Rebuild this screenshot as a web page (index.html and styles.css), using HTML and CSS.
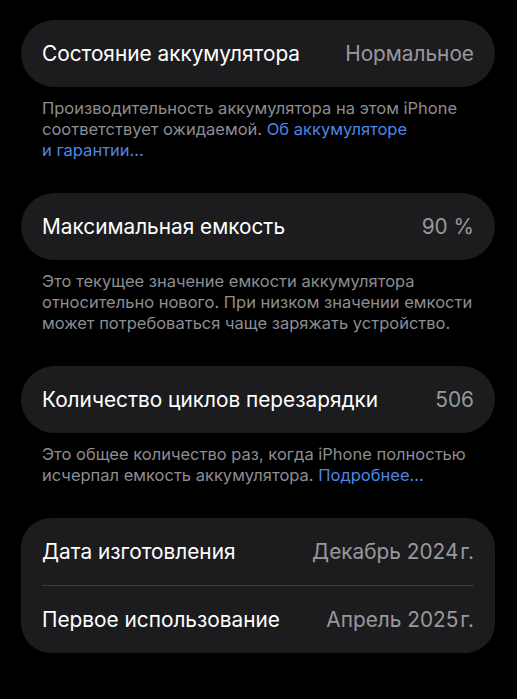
FILE: index.html
```html
<!DOCTYPE html>
<html lang="ru">
<head>
    <meta charset="UTF-8">
    <meta name="viewport" content="width=device-width, initial-scale=1.0">
    <title>Аккумулятор</title>
    <link rel="stylesheet" href="styles.css">
</head>
<body>
    <div class="page">
        <div class="section">
            <div class="card">
                <div class="row">
                    <span class="label">Состояние аккумулятора</span>
                    <span class="value">Нормальное</span>
                </div>
            </div>
            <p class="footer">Производительность аккумулятора на этом iPhone соответствует ожидаемой. <a href="#">Об аккумуляторе<br>и гарантии…</a></p>
        </div>

        <div class="section">
            <div class="card">
                <div class="row">
                    <span class="label">Максимальная емкость</span>
                    <span class="value">90 %</span>
                </div>
            </div>
            <p class="footer">Это текущее значение емкости аккумулятора относительно нового. При низком значении емкости может потребоваться чаще заряжать устройство.</p>
        </div>

        <div class="section">
            <div class="card">
                <div class="row">
                    <span class="label">Количество циклов перезарядки</span>
                    <span class="value">506</span>
                </div>
            </div>
            <p class="footer">Это общее количество раз, когда iPhone полностью исчерпал емкость аккумулятора. <a href="#">Подробнее…</a></p>
        </div>

        <div class="section">
            <div class="card card-list">
                <div class="row">
                    <span class="label">Дата изготовления</span>
                    <span class="value">Декабрь 2024&#8202;г.</span>
                </div>
                <div class="divider"></div>
                <div class="row">
                    <span class="label">Первое использование</span>
                    <span class="value">Апрель 2025&#8202;г.</span>
                </div>
            </div>
        </div>
    </div>
</body>
</html>
```

FILE: styles.css
```css
* {
    box-sizing: border-box;
}

body {
    margin: 0;
    background: #000;
    font-family: Inter, "Noto Sans", sans-serif;
    color: #fff;
}

.page {
    display: flex;
    flex-direction: column;
    gap: 32px;
    padding: 20px 22px 0 21px;
}

.card {
    background: #1c1c1e;
    border-radius: 34px;
    padding: 0 21px;
}

.card-list {
    border-radius: 30px;
}

.row {
    display: flex;
    justify-content: space-between;
    align-items: center;
    height: 67px;
    font-size: 20.8px;
}

.value {
    color: #98989d;
}

.divider {
    height: 1px;
    background: #3a3a3c;
}

.footer {
    margin: 11px 0 0;
    padding: 0 8px 0 21px;
    font-size: 16.5px;
    line-height: 21px;
    color: #8d8d92;
}

.footer a {
    color: #4d86e6;
    text-decoration: none;
}
```
